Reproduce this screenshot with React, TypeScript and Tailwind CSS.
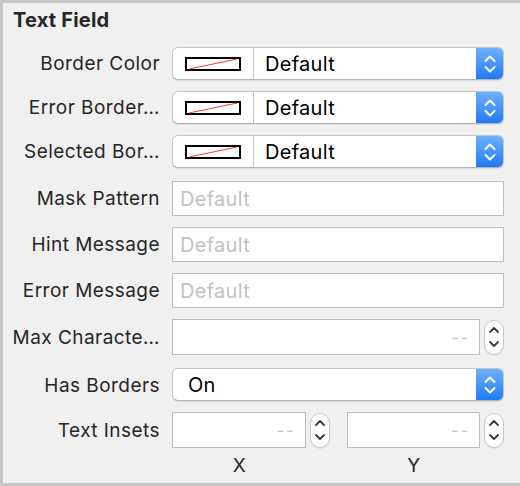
import React from "react";

function Chevrons({ className = "" }: { className?: string }) {
  return (
    <svg width="14" height="24" viewBox="0 0 14 24" fill="none" className={className}>
      <path d="M2.5 9 L7 4.5 L11.5 9" stroke="currentColor" strokeWidth="2" strokeLinecap="round" strokeLinejoin="round" />
      <path d="M2.5 15 L7 19.5 L11.5 15" stroke="currentColor" strokeWidth="2" strokeLinecap="round" strokeLinejoin="round" />
    </svg>
  );
}

function Label({ children }: { children: React.ReactNode }) {
  return (
    <div className="w-[158px] shrink-0 text-right pr-px pt-[2px] text-[19px] tracking-[0.45px] text-[#262626] whitespace-nowrap">
      {children}
    </div>
  );
}

function Popup({ text, swatch = false }: { text: string; swatch?: boolean }) {
  return (
    <div className="flex flex-1 h-[33px] bg-white rounded-[6px] border border-[#c6c6c6] border-b-[#b4b4b4] shadow-[0_1px_1px_rgba(0,0,0,0.08)] overflow-hidden">
      {swatch && (
        <div className="w-[81px] flex items-center justify-center border-r border-[#c6c6c6]">
          <svg width="56" height="14" viewBox="0 0 56 14">
            <rect x="1" y="1" width="54" height="12" fill="white" stroke="black" strokeWidth="2" />
            <line x1="4" y1="12" x2="52" y2="2" stroke="#ff3b3b" strokeWidth="1" />
          </svg>
        </div>
      )}
      <div className={`flex-1 flex items-center pt-[1px] text-[20px] tracking-[0.3px] text-black ${swatch ? "pl-[11px]" : "pl-[15px]"}`}>
        {text}
      </div>
      <div className="w-[27px] flex items-center justify-center text-white bg-gradient-to-b from-[#6cb0fb] to-[#1a7af6]">
        <Chevrons />
      </div>
    </div>
  );
}

function Field({ placeholder }: { placeholder: string }) {
  return (
    <div className="flex-1 h-[35px] bg-white border border-[#bdbdbd] flex items-center pl-[7px] pt-[1px] text-[20px] tracking-[0.3px] text-[#c2c2c2]">
      {placeholder}
    </div>
  );
}

function Stepper() {
  return (
    <div className="w-[20px] h-[35px] rounded-full bg-white border border-[#c8c8c8] shadow-[0_1px_1px_rgba(0,0,0,0.08)] flex items-center justify-center text-[#3a3a3a]">
      <svg width="12" height="28" viewBox="0 0 12 28" fill="none">
        <path d="M2 9 L6 5 L10 9" stroke="currentColor" strokeWidth="1.8" strokeLinecap="round" strokeLinejoin="round" />
        <path d="M2 19 L6 23 L10 19" stroke="currentColor" strokeWidth="1.8" strokeLinecap="round" strokeLinejoin="round" />
      </svg>
    </div>
  );
}

function NumberField({ className = "" }: { className?: string }) {
  return (
    <div className={`flex items-center gap-[4px] ${className}`}>
      <div className="flex-1 h-[36px] bg-white border border-[#bdbdbd] flex items-center justify-end pr-[9px] text-[16px] text-[#c4c4c4] tracking-[2px]">
        --
      </div>
      <Stepper />
    </div>
  );
}

export default function App() {
  return (
    <div className="w-[520px] h-[486px] bg-[#f0f0f0] border-l-[3px] border-t-[3px] border-b-[3px] border-[#c6c6c6] font-['Inter',sans-serif] overflow-hidden">
      <div className="pl-[10px] pt-[5px] text-[20px] font-bold tracking-[0.2px] text-[#262626] leading-[24px]">
        Text Field
      </div>

      <div className="flex flex-col pr-[16px] mt-[15px]">
        <div className="flex items-center gap-[11px]">
          <Label>Border Color</Label>
          <Popup text="Default" swatch />
        </div>
        <div className="flex items-center gap-[11px] mt-[11px]">
          <Label>Error Border…</Label>
          <Popup text="Default" swatch />
        </div>
        <div className="flex items-center gap-[11px] mt-[11px]">
          <Label>Selected Bor…</Label>
          <Popup text="Default" swatch />
        </div>

        <div className="flex items-center gap-[11px] mt-[13px]">
          <Label>Mask Pattern</Label>
          <Field placeholder="Default" />
        </div>
        <div className="flex items-center gap-[11px] mt-[11px]">
          <Label>Hint Message</Label>
          <Field placeholder="Default" />
        </div>
        <div className="flex items-center gap-[11px] mt-[11px]">
          <Label>Error Message</Label>
          <Field placeholder="Default" />
        </div>

        <div className="flex items-center gap-[11px] mt-[11px]">
          <Label>Max Characte…</Label>
          <NumberField className="flex-1" />
        </div>

        <div className="flex items-center gap-[11px] mt-[13px]">
          <Label>Has Borders</Label>
          <div className="flex-1 h-[34px]">
            <Popup text="On" />
          </div>
        </div>

        <div className="flex items-start gap-[11px] mt-[10px]">
          <div className="h-[36px] flex items-center">
            <Label>Text Insets</Label>
          </div>
          <div className="flex-1 grid grid-cols-2 gap-x-[17px]">
            <div className="flex flex-col">
              <NumberField />
              <div className="text-center pr-[23px] text-[19px] text-[#262626] mt-[4px]">X</div>
            </div>
            <div className="flex flex-col">
              <NumberField />
              <div className="text-center pr-[23px] text-[19px] text-[#262626] mt-[4px]">Y</div>
            </div>
          </div>
        </div>
      </div>
    </div>
  );
}
